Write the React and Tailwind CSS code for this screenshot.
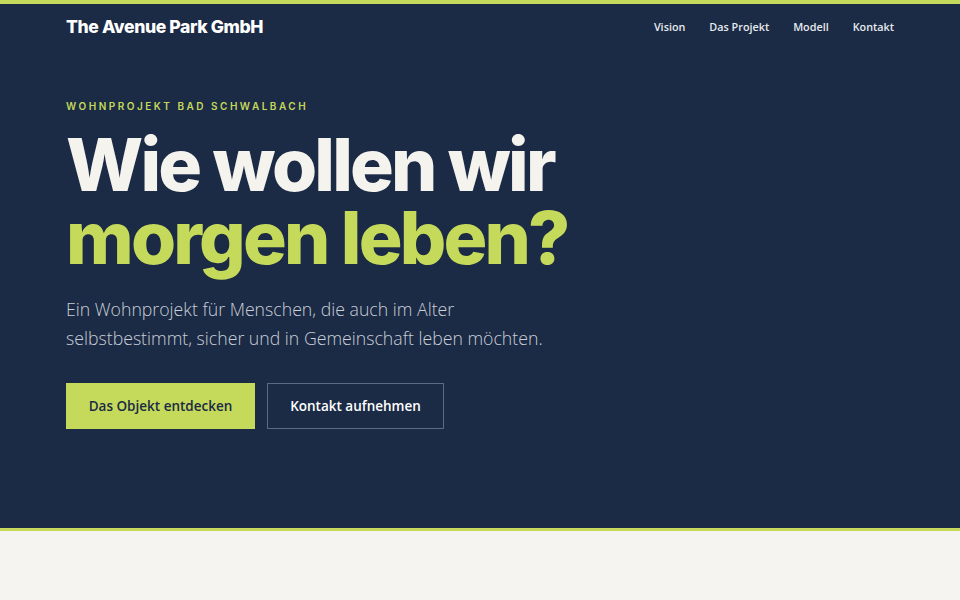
export default function App() {
  return (
    <div className="min-h-[600px] bg-[#f5f4f0]">
      <div className="bg-[#1b2a45] border-t-4 border-[#c5d95a] border-b-[3px] border-b-[#c5d95a]">
        <header className="flex items-center justify-between px-[66px] h-[47px]">
          <div className="text-[17.6px] font-extrabold text-white tracking-[-0.4px] font-['Inter',sans-serif]">
            The Avenue Park GmbH
          </div>
          <nav className="flex items-center gap-6 text-[10.8px] font-semibold text-[#e8eaee] font-['Open_Sans',sans-serif]">
            <a>Vision</a>
            <a>Das Projekt</a>
            <a>Modell</a>
            <a>Kontakt</a>
          </nav>
        </header>
        <section className="px-[66px] pt-[48px] pb-[99px]">
          <div className="text-[10px] font-semibold tracking-[2.5px] text-[#c5d95a] font-['Inter',sans-serif] leading-[14px]">
            WOHNPROJEKT BAD SCHWALBACH
          </div>
          <h1 className="mt-[15px] text-[73px] leading-[73px] font-extrabold tracking-[-2.8px] text-[#f5f3ee] font-['Inter',sans-serif]">
            Wie wollen wir
            <br />
            <span className="text-[#c5d95a]">morgen leben?</span>
          </h1>
          <p className="mt-[21px] text-[17.7px] leading-[29px] font-light text-[#c9ced7] font-['Open_Sans',sans-serif]">
            Ein Wohnprojekt für Menschen, die auch im Alter
            <br />
            selbstbestimmt, sicher und in Gemeinschaft leben möchten.
          </p>
          <div className="mt-[30px] flex gap-3 font-['Open_Sans',sans-serif]">
            <button className="h-[46px] w-[189px] bg-[#c5d95a] text-[#1b2a45] text-[13.5px] font-semibold">
              Das Objekt entdecken
            </button>
            <button className="h-[46px] w-[177px] border border-[#5d6a82] text-white text-[13.5px] font-semibold">
              Kontakt aufnehmen
            </button>
          </div>
        </section>
      </div>
    </div>
  );
}
